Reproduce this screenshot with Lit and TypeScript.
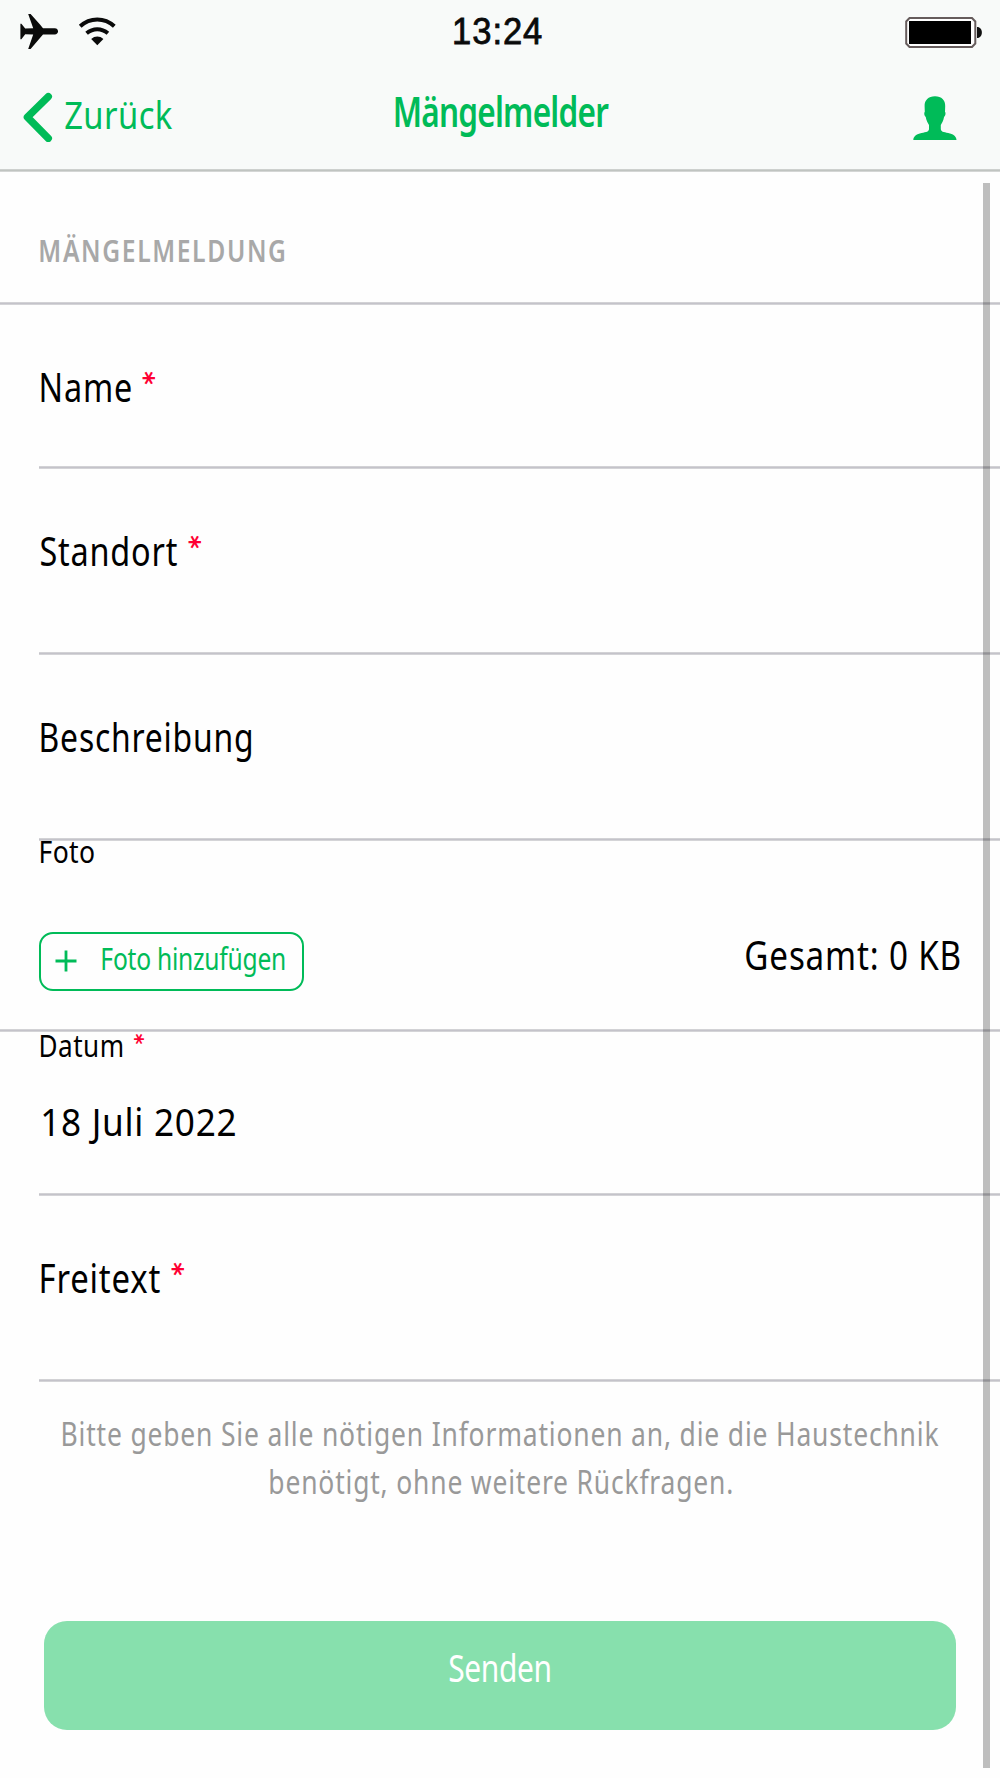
import { LitElement, html, css } from "lit";
import { customElement, property } from "lit/decorators.js";
import { styleMap } from "lit/directives/style-map.js";

const FAMILY = '"Noto Sans", "Liberation Sans", sans-serif';

/** One line of text condensed so that its visible glyphs span exactly `span` pixels. */
@customElement("fit-text")
class FitText extends LitElement {
  @property({ type: String }) text = "";
  @property({ type: Number }) span = 100;
  @property({ type: Number }) size = 40;
  @property({ type: Number }) weight = 400;
  @property({ type: Number }) track = 0;
  @property({ type: String }) family = FAMILY;

  static styles = css`
    :host { display: block; flex: none; }
    .box { white-space: pre; line-height: 1; }
    .line { display: inline-block; vertical-align: top; transform-origin: 0 0; line-height: 1; }
  `;

  render() {
    const ctx = document.createElement("canvas").getContext("2d") as any;
    ctx.font = `${this.weight} ${this.size}px ${this.family}`;
    ctx.letterSpacing = `${this.track}px`;
    const m = ctx.measureText(this.text);
    const scale = this.span / (m.actualBoundingBoxLeft + m.actualBoundingBoxRight);
    return html`<div class="box" style=${styleMap({ width: `${this.span}px`, height: `${this.size}px` })}><span
      class="line"
      style=${styleMap({
        fontFamily: this.family,
        fontSize: `${this.size}px`,
        fontWeight: String(this.weight),
        letterSpacing: `${this.track}px`,
        transform: `translate(${m.actualBoundingBoxLeft * scale}px, 1px) scaleX(${scale})`,
      })}>${this.text}</span></div>`;
  }
}

@customElement("required-mark")
class RequiredMark extends LitElement {
  @property({ type: Boolean, reflect: true }) small = false;
  static styles = css`
    :host {
      display: block; flex: none; width: 12px; height: 12px; margin: 6px 0 0 11px;
      font: 700 26px/26px "DejaVu Sans", sans-serif; color: #ff0033;
    }
    :host([small]) { width: 10px; height: 10px; margin: 5px 0 0 9px; font-size: 21px; line-height: 21px; }
    .mark { display: flex; justify-content: center; width: 100%; height: 100%; transform: rotate(90deg); }
    .glyph { margin-top: -3px; }
  `;
  render() {
    return html`<div class="mark"><span class="glyph">*</span></div>`;
  }
}

@customElement("status-bar")
class StatusBar extends LitElement {
  static styles = css`
    :host { display: flex; justify-content: space-between; height: 64px; padding: 0 16px 0 20px; color: #0a0a0a; }
    .left { display: flex; gap: 20px; width: 434px; }
    .plane { width: 38px; height: 36px; margin-top: 14px; }
    .wifi { width: 38px; height: 30px; margin-top: 16px; }
    .clock { margin-top: 13px; -webkit-text-stroke: 0.8px #0a0a0a; }
    .battery { width: 78px; height: 31px; margin: 17px 0 0 362.5px; }
    .bar { display: flex; width: 100%; }
  `;
  render() {
    return html`<div class="bar">
      <div class="left">
        <svg class="plane" viewBox="0 0 38 36">
          <path fill="currentColor" d="M8.200 0h2.400l9.600 10.800 2.800 3.400h11.800c4.300 0 4.300 6.200 0 6.200H23l-2.800 3.400L10.600 35H8.200l5-14.400-8-.4L1.400 25.200H.4V9.800h1l3.800 4.800 8-.4z"/>
        </svg>
        <svg class="wifi" viewBox="0 0 38 30">
          <g fill="none" stroke="currentColor" stroke-width="4">
            <path d="M2.200 10.300C12 1.200 26.500 1.200 36.300 10.300"/>
            <path d="M8.600 17.200C15 11.800 23.500 11.800 29.900 17.200"/>
          </g>
          <path fill="currentColor" d="M13.200 23c3.600-3.300 8.600-3.300 12.200 0l-6.100 6.200z"/>
        </svg>
      </div>
      <fit-text class="clock" text="13:24" .span=${88} .size=${36.5} .track=${1} family='"Liberation Sans", sans-serif'></fit-text>
      <svg class="battery" viewBox="0 0 78 31">
        <path d="M4.500 1H67l3.300 3.500v22L67 30H4.500L1.200 26.500v-22z" fill="#fff" stroke="#665c5c" stroke-width="2"/>
        <rect x="4" y="4" width="62" height="23" fill="#000"/>
        <path d="M72 10c6.500 0 6.500 11 0 11z" fill="#111"/>
      </svg>
    </div>`;
  }
}

@customElement("nav-bar")
class NavBar extends LitElement {
  static styles = css`
    :host { display: block; height: 105px; color: #00bb58; }
    .bar { display: flex; align-items: flex-start; padding-left: 22px; }
    .chevron { width: 31px; height: 50px; margin-top: 28px; }
    .back { margin: 29.300px 0 0 11.500px; }
    .title { margin: 26px 0 0 222.500px; }
    .person { width: 44px; height: 44px; margin: 32.300px 0 0 304px; }
  `;
  render() {
    return html`<div class="bar">
      <svg class="chevron" viewBox="0 0 31 50">
        <path d="M26.300 4.600L5.400 25.200 26.300 46.300" fill="none" stroke="currentColor" stroke-width="7.400" stroke-linecap="round" stroke-linejoin="round"/>
      </svg>
      <fit-text class="back" text="Zurück" .span=${107.5} .size=${39} .track=${0.5}></fit-text>
      <fit-text class="title" text="Mängelmelder" .span=${214} .size=${41} .weight=${600} .track=${-1}></fit-text>
      <svg class="person" viewBox="0 0 44 44">
        <path fill="currentColor" d="M22 .3c6.600 0 10.400 4 10.200 9.700l-.2 5.800c1 1.100.4 4.400-.9 5-.6 3.800-2.300 6.600-3.300 8.200v4.300c.5 3.300 4.300 2.700 9.200 4.200 4.300 1.300 6.300 3.300 6.500 6.500H.300c.2-3.200 2.200-5.200 6.500-6.500 4.900-1.500 8.700-.9 9.200-4.200V29c-1-1.600-2.700-4.400-3.300-8.200-1.300-.6-1.900-3.900-.9-5l-.2-5.800C11.400 4.300 15.400.3 22 .3z"/>
      </svg>
    </div>`;
  }
}

@customElement("form-row")
class FormRow extends LitElement {
  @property({ type: String }) label = "";
  @property({ type: Number }) span = 100;
  @property({ type: Boolean }) required = false;
  static styles = css`
    :host { display: flex; flex-direction: column; height: 186px; }
    .content { display: flex; align-items: flex-start; flex: 1; padding: 60.600px 0 0 41px; }
    .rule { height: 3px; margin-left: 39px; background: linear-gradient(#d2d2d5 1px, #c4c3ca 1px, #c4c3ca 2px, #d4d4d7 2px); }
  `;
  render() {
    return html`
      <div class="content">
        <fit-text .text=${this.label} .span=${this.span} .size=${40} .track=${1}></fit-text>
        ${this.required ? html`<required-mark></required-mark>` : ""}
      </div>
      <div class="rule"></div>`;
  }
}

@customElement("app-root")
class AppRoot extends LitElement {
  static styles = css`
    :host { display: block; }
    .page {
      position: relative; display: flex; flex-direction: column; width: 1000px; height: 1778px;
      overflow: hidden; background: #fefefe; color: #000;
    }
    .header { height: 169px; background: #f8faf9; }
    .rule { flex: none; height: 3px; background: linear-gradient(#d2d2d5 1px, #c4c3ca 1px, #c4c3ca 2px, #d4d4d7 2px); }
    .rule-header { background: linear-gradient(#cdd0ce 1px, #c0c4c1 1px, #c0c4c1 2px, #d4d6d5 2px); }
    .inset { margin-left: 39px; }
    .section { height: 130px; padding: 63px 0 0 40px; box-sizing: border-box; color: #a8a8a8; }
    .short { height: 164px; }
    .photo { display: flex; flex-direction: column; height: 188px; }
    .photo-label { margin: -6.200px 0 0 40.700px; }
    .photo-row { display: flex; justify-content: space-between; align-items: flex-start; margin-top: 66px; padding: 0 40.500px 0 39px; }
    .add {
      display: flex; align-items: flex-start; box-sizing: border-box; width: 265px; height: 59px;
      border: 2.400px solid #00bb58; border-radius: 14px; color: #00bb58;
    }
    .plus { width: 22px; height: 22px; margin: 16.500px 0 0 13.500px; }
    .add-label { margin: 9px 0 0 25px; }
    .total { margin-top: 2px; }
    .date { display: flex; flex-direction: column; height: 161px; }
    .date-label { display: flex; align-items: flex-start; margin: -3.200px 0 0 41px; }
    .date-value { margin: 41.500px 0 0 43px; height: 40px; }
    .hint { display: flex; flex-direction: column; align-items: center; gap: 16px; padding: 35px 0 0 1.500px; color: #999; }
    .send {
      display: flex; justify-content: center; box-sizing: border-box; width: 912.500px; height: 109px;
      margin: 124px 0 0 43.500px; padding-top: 26px; border-radius: 23px; background: #87e0ad; color: #fff;
    }
    .scrollbar { position: absolute; left: 983px; top: 183px; width: 7px; height: 1585px; background: rgba(0, 0, 0, 0.25); }
  `;

  render() {
    return html`<div class="page">
      <div class="header">
        <status-bar></status-bar>
        <nav-bar></nav-bar>
      </div>
      <div class="rule rule-header"></div>
      <div class="section">
        <fit-text text="MÄNGELMELDUNG" .span=${244.5} .size=${30} .weight=${600} .track=${2}></fit-text>
      </div>
      <div class="rule"></div>
      <form-row class="short" label="Name" .span=${90} required></form-row>
      <form-row label="Standort" .span=${136} required></form-row>
      <form-row label="Beschreibung" .span=${210.5}></form-row>
      <div class="photo">
        <fit-text class="photo-label" text="Foto" .span=${53.5} .size=${31} .track=${0.5}></fit-text>
        <div class="photo-row">
          <div class="add">
            <svg class="plus" viewBox="0 0 22 22">
              <path d="M11 .5v21M.5 11h21" stroke="currentColor" stroke-width="2.800"/>
            </svg>
            <fit-text class="add-label" text="Foto hinzufügen" .span=${183} .size=${30} .track=${-0.3}></fit-text>
          </div>
          <fit-text class="total" text="Gesamt: 0 KB" .span=${213.5} .size=${40} .track=${1}></fit-text>
        </div>
      </div>
      <div class="rule"></div>
      <div class="date">
        <div class="date-label">
          <fit-text text="Datum" .span=${81.5} .size=${31} .track=${0.6}></fit-text>
          <required-mark small></required-mark>
        </div>
        <fit-text class="date-value" text="18 Juli 2022" .span=${192} .size=${38} .track=${0.8}></fit-text>
      </div>
      <div class="rule inset"></div>
      <form-row label="Freitext" .span=${119} required></form-row>
      <div class="hint">
        <fit-text text="Bitte geben Sie alle nötigen Informationen an, die die Haustechnik" .span=${875.5} .size=${32} .track=${1}></fit-text>
        <fit-text text="benötigt, ohne weitere Rückfragen." .span=${462} .size=${32} .track=${1}></fit-text>
      </div>
      <div class="send">
        <fit-text text="Senden" .span=${101} .size=${38} .track=${-0.5}></fit-text>
      </div>
      <div class="scrollbar"></div>
    </div>`;
  }
}
